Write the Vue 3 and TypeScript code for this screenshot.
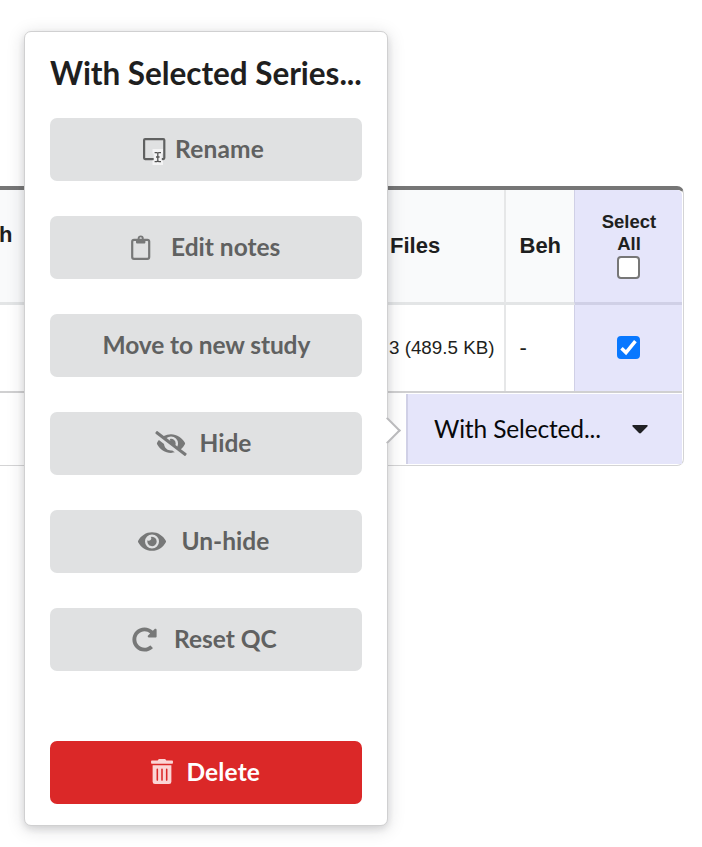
<script setup lang="ts">
import { ref } from 'vue'

interface Action {
  name: string
  label: string
}

const actions: Action[] = [
  { name: 'rename', label: 'Rename' },
  { name: 'notes', label: 'Edit notes' },
  { name: 'move', label: 'Move to new study' },
  { name: 'hide', label: 'Hide' },
  { name: 'unhide', label: 'Un-hide' },
  { name: 'reset', label: 'Reset QC' },
  { name: 'delete', label: 'Delete' },
]

const allSelected = ref(false)
const rowSelected = ref(true)
</script>

<template>
  <main class="page">
    <section class="series">
      <div class="row head">
        <div class="cell lead"><span class="lead-text">h</span></div>
        <div class="cell files">Files</div>
        <div class="cell beh">Beh</div>
        <label class="cell pick">
          <span>Select<br />All</span>
          <input v-model="allSelected" type="checkbox" class="check" />
        </label>
      </div>
      <div class="row body">
        <div class="cell lead"></div>
        <div class="cell files">3 (489.5 KB)</div>
        <div class="cell beh">-</div>
        <label class="cell pick">
          <input v-model="rowSelected" type="checkbox" class="check" />
          <svg v-if="rowSelected" class="tick" viewBox="0 0 23 23"><path d="M4.500 12.200 9 16.600 18.400 5.200" /></svg>
        </label>
      </div>
      <div class="row foot">
        <div class="blank"></div>
        <button class="dropdown" type="button">
          <span>With Selected...</span>
          <svg class="caret" viewBox="0 0 16 9"><path d="M1.200 0h13.600c1 0 1.300.9.6 1.500L9 8a1.500 1.500 0 0 1-2 0L.6 1.500C0 .9.3 0 1.200 0z" /></svg>
        </button>
      </div>
    </section>

    <aside class="popup">
      <div class="pointer"></div>
      <h2 class="title">With Selected Series...</h2>
      <button v-for="a in actions" :key="a.name" type="button" class="action" :class="a.name">
        <svg v-if="a.name === 'rename'" class="icon" viewBox="0 0 24 27">
          <rect x="1.100" y="1.100" width="20.200" height="20" rx="1" class="outline" />
          <path d="M9.500 11h10.500v4.500h-1.200v7H20V27H9.500v-4.500h1.200v-7H9.500z" fill="#f4f4f5" />
          <path d="M11.600 14.600h2.200l1 .8 1-.8H18M14.800 15v8M11.600 23.600h2.200l1-.8 1 .8H18M13 19h3.600" class="cursor" />
        </svg>
        <svg v-else-if="a.name === 'notes'" class="icon" viewBox="0 0 20 26">
          <rect x="1.200" y="4.800" width="17" height="19" rx="1.800" class="outline" />
          <circle cx="9.700" cy="3.500" r="2.100" class="ring" />
          <path d="M5 4.800h9.400v2.400c0 .8-.5 1.300-1.300 1.300H6.300C5.500 8.500 5 8 5 7.200z" />
        </svg>
        <svg v-else-if="a.name === 'hide'" class="icon" viewBox="0 0 640 512">
          <path d="M320 400c-75.850 0-137.250-58.710-142.900-133.110L72.200 185.820c-13.790 17.300-26.480 35.590-36.720 55.590a32.350 32.350 0 0 0 0 29.190C89.710 376.410 197.070 448 320 448c26.910 0 52.870-4 77.890-10.460L346 397.390a144.130 144.130 0 0 1-26 2.610zm313.820 58.100-110.550-85.440a331.250 331.250 0 0 0 81.250-102.070 32.350 32.350 0 0 0 0-29.190C550.290 135.590 442.930 64 320 64a308.150 308.150 0 0 0-147.320 37.700L45.460 3.370A16 16 0 0 0 23 6.180L3.370 31.450A16 16 0 0 0 6.180 53.900l588.360 454.730a16 16 0 0 0 22.460-2.810l19.640-25.270a16 16 0 0 0-2.820-22.450zM450.120 316.750 410.820 286.370A94.750 94.750 0 0 0 416 256a94.760 94.760 0 0 0-121.310-92.210A47.650 47.650 0 0 1 304 192a46.640 46.640 0 0 1-1.540 10l-73.610-56.890A142.310 142.310 0 0 1 320 112a143.920 143.920 0 0 1 144 144c0 21.630-5.290 41.790-13.880 60.750z" />
        </svg>
        <svg v-else-if="a.name === 'unhide'" class="icon" viewBox="0 0 576 512">
          <path d="M572.520 241.400C518.290 135.590 410.930 64 288 64S57.680 135.640 3.480 241.410a32.350 32.350 0 0 0 0 29.190C57.710 376.410 165.070 448 288 448s230.320-71.640 284.520-177.410a32.350 32.350 0 0 0 0-29.190zM288 400a144 144 0 1 1 144-144 143.930 143.930 0 0 1-144 144zm0-240a95.310 95.310 0 0 0-25.310 3.790 47.850 47.850 0 0 1-66.900 66.900A95.780 95.780 0 1 0 288 160z" />
        </svg>
        <svg v-else-if="a.name === 'reset'" class="icon" viewBox="0 0 512 512">
          <path d="M256.455 8c66.269.119 126.437 26.233 170.859 68.685l35.715-35.715C478.149 25.851 504 36.559 504 57.941V192c0 13.255-10.745 24-24 24H345.941c-21.382 0-32.090-25.851-16.971-40.971l41.750-41.750c-30.864-28.899-70.801-44.907-113.230-45.273-92.398-.798-170.283 73.977-169.484 169.442C88.764 348.009 162.184 424 256 424c41.127 0 79.997-14.678 110.629-41.556 4.743-4.161 11.906-3.908 16.368.553l39.662 39.662c4.872 4.872 4.631 12.815-.482 17.433C378.202 479.813 319.926 504 256 504 119.034 504 8.001 392.967 8 256.002 7.999 119.193 119.646 7.755 256.455 8z" />
        </svg>
        <svg v-else-if="a.name === 'delete'" class="icon" viewBox="0 0 448 512">
          <path d="M32 464a48 48 0 0 0 48 48h288a48 48 0 0 0 48-48V128H32zM304 208a16 16 0 0 1 32 0v224a16 16 0 0 1-32 0zm-96 0a16 16 0 0 1 32 0v224a16 16 0 0 1-32 0zm-96 0a16 16 0 0 1 32 0v224a16 16 0 0 1-32 0zM432 32H312l-9.400-18.700A24 24 0 0 0 281.100 0H166.800a23.720 23.720 0 0 0-21.400 13.300L136 32H16A16 16 0 0 0 0 48v32a16 16 0 0 0 16 16h416a16 16 0 0 0 16-16V48a16 16 0 0 0-16-16z" />
        </svg>
        <span class="label">{{ a.label }}</span>
      </button>
    </aside>
  </main>
</template>

<style>
body {
  margin: 0;
  background: #fff;
}
</style>

<style scoped>
* {
  box-sizing: border-box;
}

.page {
  position: relative;
  height: 847px;
  padding-top: 186px;
  overflow: hidden;
}

.series {
  width: 684px;
  height: 280px;
  border: 1px solid #d4d4d5;
  border-top: 4px solid #767676;
  border-left: 0;
  border-radius: 0 7px 7px 0;
  padding-right: 1px;
  font-family: 'Liberation Sans', Arial, sans-serif;
  color: #1e1f20;
}

.row {
  display: grid;
  grid-template-columns: 388px 118px 69px 1fr;
}

.head {
  height: 115px;
  background: #f9fafb;
  font-size: 22px;
  font-weight: 700;
  border-radius: 0 5px 0 0;
}

.body {
  height: 86px;
  font-size: 18.800px;
}

.cell {
  display: flex;
  align-items: center;
  border-right: 2px solid #e6e7e8;
}

.head .cell {
  border-bottom: 3px solid #e3e5e6;
}

.lead {
  border-right: 0;
}

.lead-text {
  margin: -22px 0 0 -1px;
}

.files {
  padding-left: 2px;
}

.body .files {
  padding: 0 0 1px 1px;
  white-space: nowrap;
}

.beh {
  padding-left: 13.500px;
  border-right: 1px solid #d0d0e6;
}

.body .beh {
  padding-bottom: 1px;
  font-size: 22px;
}

.pick {
  flex-direction: column;
  justify-content: center;
  background: #e5e5fa;
  border-right: 0;
  font-size: 18.500px;
  line-height: 22px;
  text-align: center;
}

.pick > span {
  margin: -1px 0 1px 1px;
}

.head .pick {
  padding-bottom: 1px;
  border-bottom-color: #d0d0e6;
  border-radius: 0 5px 0 0;
}

.check {
  appearance: none;
  width: 23px;
  height: 23px;
  margin: 0;
  border: 2px solid #777;
  border-radius: 4px;
  background: #fff;
}

.check:checked {
  border-color: #0878ff;
  background: #0878ff;
}

.pick > * {
  grid-area: 1 / 1;
}

.body .pick {
  display: grid;
  place-content: center;
  padding-bottom: 1px;
}

.tick {
  width: 23px;
  height: 23px;
  pointer-events: none;
}

.tick path {
  fill: none;
  stroke: #fff;
  stroke-width: 3.500;
}

.foot {
  height: 74px;
  grid-template-columns: 406px 1fr;
  border-top: 2px solid #d0d0d1;
  padding-bottom: 1px;
}

.dropdown {
  display: flex;
  align-items: center;
  margin-top: 1px;
  padding: 0 34px 1px 26px;
  border: 0;
  border-left: 2px solid #d0d0e6;
  background: #e5e5fa;
  color: #08090a;
  font: 400 24.500px Lato, sans-serif;
  letter-spacing: -0.15px;
  white-space: nowrap;
}

.caret {
  width: 16px;
  height: 9px;
  margin: 1px 0 0 auto;
  fill: #202124;
}

.popup {
  position: absolute;
  top: 31px;
  left: 24px;
  display: flex;
  flex-direction: column;
  gap: 35px;
  width: 364px;
  height: 795px;
  padding: 24px 25px;
  border: 1px solid #d0d0d1;
  border-radius: 7px;
  background: #fff;
  box-shadow: 0 3px 7px rgba(34, 36, 38, 0.12), 0 3px 18px rgba(34, 36, 38, 0.15);
  font-family: Lato, sans-serif;
}

.pointer {
  position: absolute;
  top: 389px;
  right: -10px;
  width: 19px;
  height: 19px;
  transform: rotate(45deg);
  border: 2px solid #bababc;
  border-left: 0;
  border-bottom: 0;
  background: #fff;
}

.title {
  height: 27px;
  margin: 0;
  font-size: 31.500px;
  line-height: 34px;
  font-weight: 700;
  letter-spacing: -0.05px;
  color: #1f1f1f;
  white-space: nowrap;
}

.action {
  display: flex;
  align-items: center;
  flex: 0 0 63px;
  padding: 0;
  border: 0;
  border-radius: 7px;
  background: #e0e1e2;
  color: #606161;
  font: 700 24.500px Lato, sans-serif;
  white-space: nowrap;
}

.label {
  padding-bottom: 2px;
}

.icon {
  flex: none;
  fill: #777878;
}

.outline {
  fill: none;
  stroke: #777878;
  stroke-width: 2.200;
}

.ring {
  fill: none;
  stroke: #777878;
  stroke-width: 1.900;
}

.cursor {
  fill: none;
  stroke: #555;
  stroke-width: 1.300;
}

.rename {
  padding-left: 93px;
  letter-spacing: 0.2px;
}

.rename .icon {
  width: 24px;
  height: 27px;
  margin: 4px 8px 0 0;
}

.rename .outline {
  stroke: #606161;
}

.notes {
  padding-left: 81px;
}

.notes .icon {
  width: 20px;
  height: 26px;
  margin: 0 20px 0 0;
}

.move {
  padding-left: 52.500px;
  letter-spacing: -0.1px;
}

.hide {
  padding-left: 105px;
}

.hide .icon {
  width: 32px;
  height: 25px;
  margin-right: 12.500px;
}

.unhide {
  padding-left: 88px;
}

.unhide .icon {
  width: 28px;
  height: 25px;
  margin-right: 15.500px;
}

.reset {
  padding-left: 82px;
}

.reset .icon {
  width: 25px;
  height: 25px;
  margin-right: 17px;
}

.delete {
  margin-top: 35px;
  padding-left: 101px;
  background: #db2828;
  color: #fff;
  letter-spacing: 0.15px;
}

.delete .icon {
  width: 22px;
  height: 25px;
  margin: 0 13.500px 2px 0;
  fill: #fbd5d5;
}
</style>
